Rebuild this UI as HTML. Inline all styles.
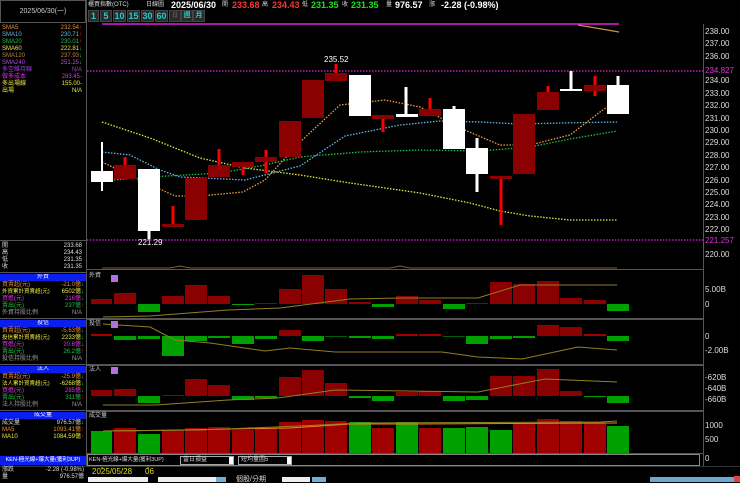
<!DOCTYPE html>
<html><head><meta charset="utf-8"><style>
*{margin:0;padding:0;box-sizing:border-box}
body{width:740px;height:482px;background:#000;overflow:hidden;position:relative;font-family:"Liberation Sans","Noto Sans CJK TC",sans-serif;color:#ddd}
.t{position:absolute;font-size:6px;line-height:7px;white-space:nowrap}
.r{text-align:right}
.a{position:absolute;left:705px;font-size:8px;line-height:8px;color:#ddd;white-space:nowrap}
.hd{position:absolute;left:0;width:86px;height:7px;background:#0a1ef0;color:#fff;font-size:6px;line-height:7px;text-align:center;overflow:hidden;white-space:nowrap}
.btn{position:absolute;top:10px;height:12px;background:#2a2a2a;border:1px solid #444;color:#2cc;font-size:9px;line-height:10px;text-align:center;font-weight:bold}
</style></head><body>
<svg width="740" height="482" style="position:absolute;left:0;top:0">
<rect x="0.5" y="0.5" width="85" height="22" fill="none" stroke="#555"/>
<g stroke="#555" fill="none">
<line x1="86.5" y1="0" x2="86.5" y2="466"/>
<line x1="87" y1="269.5" x2="703" y2="269.5"/>
<line x1="87" y1="318.5" x2="703" y2="318.5"/>
<line x1="87" y1="319.5" x2="703" y2="319.5"/>
<line x1="87" y1="364.5" x2="703" y2="364.5"/>
<line x1="87" y1="365.5" x2="703" y2="365.5"/>
<line x1="87" y1="410.5" x2="703" y2="410.5"/>
<line x1="87" y1="411.5" x2="703" y2="411.5"/>
<line x1="87" y1="453.5" x2="703" y2="453.5"/>
<line x1="703.5" y1="24" x2="703.5" y2="466"/>
<line x1="0" y1="240.5" x2="86" y2="240.5"/>
<line x1="0" y1="272.5" x2="86" y2="272.5"/>
<line x1="0" y1="318.5" x2="86" y2="318.5"/>
<line x1="0" y1="364.5" x2="86" y2="364.5"/>
<line x1="0" y1="410.5" x2="86" y2="410.5"/>
</g>
<rect x="87.5" y="454.5" width="612" height="11" fill="none" stroke="#888"/>
<line x1="102" y1="24" x2="619" y2="24" stroke="#e020e0" stroke-width="1.5"/>
<line x1="578" y1="25" x2="619" y2="32" stroke="#c89040" stroke-width="1.2"/>
<line x1="87" y1="71" x2="703" y2="71" stroke="#e020e0" stroke-dasharray="1.5,1.5" stroke-width="1.2"/>
<line x1="87" y1="240" x2="703" y2="240" stroke="#e020e0" stroke-dasharray="1.5,1.5" stroke-width="1.2"/>
<polyline points="102,268 170,268 180,266 190,268 390,268 400,266 410,268 617,268" fill="none" stroke="#806030" stroke-width="1"/>
<g fill="none" stroke-width="1.3" stroke-dasharray="1.5,1.5">
<polyline stroke="#e8e840" points="102,122 150,138 200,158 245,168 300,175 350,183 420,193 470,203 500,211 530,216 570,220 617,220"/>
<polyline stroke="#60b8e8" points="102,152 130,155 160,170 180,177 245,180 300,166 345,136 400,125 440,121 480,122 520,124 560,123 617,122"/>
<polyline stroke="#20c040" points="102,181 150,177 220,173 260,166 300,157 360,152 420,150 480,151 530,147 570,139 617,131"/>
<polyline stroke="#f0a040" points="102,162 140,180 175,196 200,196 243,192 265,180 300,142 340,105 385,100 420,107 460,128 500,145 530,145 570,135 600,112 617,100"/>
</g>
<g>
<line x1="102" y1="142" x2="102" y2="191" stroke="#fff" stroke-width="2"/>
<rect x="91" y="171" width="22" height="11" fill="#fff"/>
<line x1="125" y1="157" x2="125" y2="179" stroke="#f00" stroke-width="3"/>
<rect x="114" y="165" width="22" height="14" fill="#8b0000"/>
<line x1="149" y1="169" x2="149" y2="239" stroke="#fff" stroke-width="3"/>
<rect x="138" y="169" width="22" height="62" fill="#fff"/>
<line x1="173" y1="206" x2="173" y2="226" stroke="#f00" stroke-width="3"/>
<rect x="162" y="224" width="22" height="3" fill="#8b0000"/>
<rect x="185" y="178" width="22" height="42" fill="#8b0000"/>
<line x1="219" y1="149" x2="219" y2="166" stroke="#f00" stroke-width="3"/>
<rect x="208" y="165" width="22" height="12" fill="#8b0000"/>
<line x1="243" y1="162" x2="243" y2="175" stroke="#f00" stroke-width="3"/>
<rect x="232" y="162" width="22" height="5" fill="#8b0000"/>
<line x1="266" y1="150" x2="266" y2="173" stroke="#f00" stroke-width="3"/>
<rect x="255" y="157" width="22" height="5" fill="#8b0000"/>
<rect x="279" y="121" width="22" height="36" fill="#8b0000"/>
<rect x="302" y="80" width="22" height="38" fill="#8b0000"/>
<line x1="336" y1="64" x2="336" y2="74" stroke="#f00" stroke-width="3"/>
<rect x="325" y="73" width="22" height="8" fill="#8b0000"/>
<rect x="349" y="75" width="22" height="41" fill="#fff"/>
<line x1="383" y1="115" x2="383" y2="132" stroke="#f00" stroke-width="3"/>
<rect x="372" y="115" width="22" height="4" fill="#8b0000"/>
<line x1="406" y1="87" x2="406" y2="117" stroke="#fff" stroke-width="3"/>
<rect x="396" y="114" width="22" height="3" fill="#fff"/>
<line x1="430" y1="98" x2="430" y2="116" stroke="#f00" stroke-width="3"/>
<rect x="419" y="109" width="22" height="7" fill="#8b0000"/>
<line x1="454" y1="106" x2="454" y2="110" stroke="#fff" stroke-width="3"/>
<rect x="443" y="109" width="22" height="40" fill="#fff"/>
<line x1="477" y1="138" x2="477" y2="192" stroke="#fff" stroke-width="3"/>
<rect x="466" y="148" width="22" height="26" fill="#fff"/>
<line x1="501" y1="176" x2="501" y2="225" stroke="#f00" stroke-width="3"/>
<rect x="490" y="176" width="22" height="3" fill="#8b0000"/>
<rect x="513" y="114" width="22" height="60" fill="#8b0000"/>
<line x1="548" y1="86" x2="548" y2="92" stroke="#f00" stroke-width="3"/>
<rect x="537" y="92" width="22" height="18" fill="#8b0000"/>
<line x1="571" y1="71" x2="571" y2="91" stroke="#fff" stroke-width="3"/>
<rect x="560" y="89" width="22" height="2" fill="#fff"/>
<line x1="595" y1="76" x2="595" y2="96" stroke="#f00" stroke-width="3"/>
<rect x="584" y="85" width="22" height="6" fill="#8b0000"/>
<line x1="618" y1="76" x2="618" y2="85" stroke="#fff" stroke-width="3"/>
<rect x="607" y="85" width="22" height="29" fill="#fff"/>
</g>
<text x="324" y="62" fill="#fff" font-size="8" font-family="Liberation Sans">235.52</text>
<text x="138" y="245" fill="#fff" font-size="8" font-family="Liberation Sans">221.29</text>
<g>
<rect x="91" y="299" width="21" height="5" fill="#8b0000"/><rect x="114" y="293" width="22" height="11" fill="#8b0000"/><rect x="138" y="304" width="22" height="8" fill="#00a000"/>
<rect x="162" y="296" width="22" height="8" fill="#8b0000"/><rect x="185" y="285" width="22" height="19" fill="#8b0000"/><rect x="208" y="296" width="22" height="8" fill="#8b0000"/>
<rect x="232" y="304" width="22" height="1" fill="#00a000"/><rect x="255" y="303" width="22" height="1" fill="#8b0000"/><rect x="279" y="289" width="22" height="15" fill="#8b0000"/>
<rect x="302" y="275" width="22" height="29" fill="#8b0000"/><rect x="325" y="289" width="22" height="15" fill="#8b0000"/><rect x="349" y="302" width="22" height="2" fill="#8b0000"/>
<rect x="372" y="304" width="22" height="3" fill="#00a000"/><rect x="396" y="296" width="22" height="8" fill="#8b0000"/><rect x="419" y="300" width="22" height="4" fill="#8b0000"/>
<rect x="443" y="304" width="22" height="5" fill="#00a000"/><rect x="466" y="303" width="22" height="1" fill="#8b0000"/><rect x="490" y="282" width="22" height="22" fill="#8b0000"/>
<rect x="513" y="284" width="22" height="20" fill="#8b0000"/><rect x="537" y="281" width="22" height="23" fill="#8b0000"/><rect x="560" y="298" width="22" height="6" fill="#8b0000"/>
<rect x="584" y="300" width="22" height="4" fill="#8b0000"/><rect x="607" y="304" width="22" height="7" fill="#00a000"/>
<polyline points="103,317 150,316 228,310 280,308 350,299 400,298 478,298 520,285 550,285 617,285" fill="none" stroke="#908020" stroke-width="1"/>
</g>
<g>
<rect x="91" y="334" width="21" height="2" fill="#a00000"/><rect x="114" y="336" width="22" height="4" fill="#00a000"/><rect x="138" y="336" width="22" height="3" fill="#00a000"/>
<rect x="162" y="336" width="22" height="20" fill="#00a000"/><rect x="185" y="336" width="22" height="5" fill="#00a000"/><rect x="208" y="336" width="22" height="2" fill="#00a000"/>
<rect x="232" y="336" width="22" height="8" fill="#00a000"/><rect x="255" y="336" width="22" height="3" fill="#00a000"/><rect x="279" y="330" width="22" height="6" fill="#8b0000"/>
<rect x="302" y="336" width="22" height="5" fill="#00a000"/><rect x="325" y="336" width="22" height="1" fill="#006000"/><rect x="349" y="336" width="22" height="2" fill="#00a000"/>
<rect x="372" y="336" width="22" height="3" fill="#00a000"/><rect x="396" y="334" width="22" height="2" fill="#a00000"/><rect x="419" y="334" width="22" height="2" fill="#a00000"/>
<rect x="443" y="336" width="22" height="1" fill="#006000"/><rect x="466" y="336" width="22" height="8" fill="#00a000"/><rect x="490" y="336" width="22" height="3" fill="#00a000"/>
<rect x="513" y="336" width="22" height="2" fill="#00a000"/><rect x="537" y="325" width="22" height="11" fill="#8b0000"/><rect x="560" y="327" width="22" height="9" fill="#8b0000"/>
<rect x="584" y="334" width="22" height="2" fill="#a00000"/><rect x="607" y="336" width="22" height="5" fill="#00a000"/>
<polyline points="103,324 150,327 175,340 210,343 265,351 290,348 335,352 442,352 478,357 522,359 550,353 578,347 617,350" fill="none" stroke="#908020" stroke-width="1"/>
</g>
<g>
<rect x="91" y="390" width="21" height="6" fill="#8b0000"/><rect x="114" y="389" width="22" height="7" fill="#8b0000"/><rect x="138" y="396" width="22" height="7" fill="#00a000"/>
<rect x="162" y="395" width="22" height="1" fill="#8b0000"/><rect x="185" y="379" width="22" height="17" fill="#8b0000"/><rect x="208" y="385" width="22" height="11" fill="#8b0000"/>
<rect x="232" y="396" width="22" height="4" fill="#00a000"/><rect x="255" y="396" width="22" height="2" fill="#00a000"/><rect x="279" y="377" width="22" height="19" fill="#8b0000"/>
<rect x="302" y="370" width="22" height="26" fill="#8b0000"/><rect x="325" y="383" width="22" height="13" fill="#8b0000"/><rect x="349" y="396" width="22" height="2" fill="#00a000"/>
<rect x="372" y="396" width="22" height="5" fill="#00a000"/><rect x="396" y="392" width="22" height="4" fill="#8b0000"/><rect x="419" y="391" width="22" height="5" fill="#8b0000"/>
<rect x="443" y="396" width="22" height="5" fill="#00a000"/><rect x="466" y="396" width="22" height="4" fill="#00a000"/><rect x="490" y="376" width="22" height="20" fill="#8b0000"/>
<rect x="513" y="376" width="22" height="20" fill="#8b0000"/><rect x="537" y="369" width="22" height="27" fill="#8b0000"/><rect x="560" y="391" width="22" height="5" fill="#8b0000"/>
<rect x="584" y="396" width="22" height="1" fill="#00a000"/><rect x="607" y="396" width="22" height="7" fill="#00a000"/>
<polyline points="103,405 156,405 228,400 278,398 335,390 478,392 545,379 617,382" fill="none" stroke="#908020" stroke-width="1"/>
</g>
<g>
<rect x="91" y="431" width="21" height="22" fill="#00a000"/><rect x="114" y="428" width="22" height="25" fill="#a00000"/><rect x="138" y="434" width="22" height="19" fill="#00a000"/>
<rect x="162" y="430" width="22" height="23" fill="#a00000"/><rect x="185" y="428" width="22" height="25" fill="#a00000"/><rect x="208" y="427" width="22" height="26" fill="#a00000"/>
<rect x="232" y="430" width="22" height="23" fill="#a00000"/><rect x="255" y="428" width="22" height="25" fill="#a00000"/><rect x="279" y="422" width="22" height="31" fill="#a00000"/>
<rect x="302" y="420" width="22" height="33" fill="#a00000"/><rect x="325" y="421" width="22" height="32" fill="#a00000"/><rect x="349" y="422" width="22" height="31" fill="#00a000"/>
<rect x="372" y="428" width="22" height="25" fill="#a00000"/><rect x="396" y="422" width="22" height="31" fill="#00a000"/><rect x="419" y="428" width="22" height="25" fill="#a00000"/>
<rect x="443" y="428" width="22" height="25" fill="#00a000"/><rect x="466" y="427" width="22" height="26" fill="#00a000"/><rect x="490" y="430" width="22" height="23" fill="#00a000"/>
<rect x="513" y="423" width="22" height="30" fill="#a00000"/><rect x="537" y="419" width="22" height="34" fill="#a00000"/><rect x="560" y="421" width="22" height="32" fill="#a00000"/>
<rect x="584" y="423" width="22" height="30" fill="#a00000"/><rect x="607" y="426" width="22" height="27" fill="#00a000"/>
<polyline points="103,431 180,430 290,428 350,424 420,424 617,423" fill="none" stroke="#f08020" stroke-width="1"/>
<polyline points="103,431 200,430 300,426 360,423 600,422 617,421" fill="none" stroke="#908020" stroke-width="1"/>
</g>
<rect x="111" y="275" width="7" height="7" fill="#b070e0"/>
<rect x="111" y="321" width="7" height="7" fill="#b070e0"/>
<rect x="111" y="367" width="7" height="7" fill="#b070e0"/>
<line x1="102" y1="466" x2="102" y2="469" stroke="#cc0"/><line x1="148" y1="466" x2="148" y2="469" stroke="#cc0"/>
<line x1="0" y1="466.5" x2="740" y2="466.5" stroke="#333"/>
<rect x="180.5" y="456.5" width="53" height="8" fill="#000" stroke="#aaa"/><rect x="229" y="457" width="4" height="7" fill="#fff"/>
<rect x="238.5" y="456.5" width="53" height="8" fill="#000" stroke="#aaa"/><rect x="287" y="457" width="4" height="7" fill="#fff"/>
<rect x="88" y="477" width="60" height="6" fill="#eee"/><rect x="158" y="477" width="58" height="6" fill="#eee"/><rect x="216" y="477" width="10" height="6" fill="#6ab0e0"/>
<rect x="282" y="477" width="28" height="6" fill="#eee"/><rect x="312" y="477" width="14" height="6" fill="#6ab0e0"/>
<rect x="650" y="477" width="90" height="6" fill="#6aa8d8"/><rect x="734" y="476" width="6" height="6" fill="#e04040"/>
</svg>

<div class="t" style="left:0;top:8px;width:86px;text-align:center;color:#ccc;font-size:7px">2025/06/30(一)</div>
<div class="t" style="left:88px;top:2px;color:#ddd">櫃買指數(OTC)</div>
<div class="t" style="left:146px;top:2px;color:#ddd">日線圖</div>
<div class="t" style="left:171px;top:1px;font-size:9px;line-height:9px;color:#fff;font-weight:bold">2025/06/30</div>
<div class="t" style="left:222px;top:2px;color:#ddd">開</div>
<div class="t" style="left:232px;top:1px;font-size:9px;line-height:9px;color:#f33;font-weight:bold">233.68</div>
<div class="t" style="left:262px;top:2px;color:#ddd">高</div>
<div class="t" style="left:272px;top:1px;font-size:9px;line-height:9px;color:#f33;font-weight:bold">234.43</div>
<div class="t" style="left:302px;top:2px;color:#ddd">低</div>
<div class="t" style="left:311px;top:1px;font-size:9px;line-height:9px;color:#2d2;font-weight:bold">231.35</div>
<div class="t" style="left:342px;top:2px;color:#ddd">收</div>
<div class="t" style="left:351px;top:1px;font-size:9px;line-height:9px;color:#2d2;font-weight:bold">231.35</div>
<div class="t" style="left:386px;top:2px;color:#ddd">量</div>
<div class="t" style="left:395px;top:1px;font-size:9px;line-height:9px;color:#fff;font-weight:bold">976.57</div>
<div class="t" style="left:429px;top:2px;color:#ddd">漲</div>
<div class="t" style="left:441px;top:1px;font-size:9px;line-height:9px;color:#fff;font-weight:bold">-2.28 (-0.98%)</div>
<div class="btn" style="left:88px;width:11px">1</div>
<div class="btn" style="left:100px;width:12px">5</div>
<div class="btn" style="left:113px;width:13px">10</div>
<div class="btn" style="left:127px;width:13px">15</div>
<div class="btn" style="left:141px;width:13px">30</div>
<div class="btn" style="left:155px;width:13px">60</div>
<div class="btn" style="left:169px;width:12px;color:#555;font-size:6px">日</div>
<div class="btn" style="left:181px;width:12px;font-size:7px">週</div>
<div class="btn" style="left:193px;width:12px;font-size:7px">月</div>

<div class="t" style="left:2px;top:25px;color:#e89030">SMA5</div><div class="t r" style="right:658px;top:25px;color:#e89030">232.54<span style="color:#f22">↑</span></div>
<div class="t" style="left:2px;top:32px;color:#60b8e8">SMA10</div><div class="t r" style="right:658px;top:32px;color:#60b8e8">230.71<span style="color:#f22">↑</span></div>
<div class="t" style="left:2px;top:39px;color:#20c040">SMA20</div><div class="t r" style="right:658px;top:39px;color:#20c040">230.01<span style="color:#f22">↑</span></div>
<div class="t" style="left:2px;top:46px;color:#e8e840">SMA60</div><div class="t r" style="right:658px;top:46px;color:#e8e840">222.81<span style="color:#2d2">↓</span></div>
<div class="t" style="left:2px;top:53px;color:#c08040">SMA120</div><div class="t r" style="right:658px;top:53px;color:#c08040">237.93<span style="color:#2d2">↓</span></div>
<div class="t" style="left:2px;top:60px;color:#b050e0">SMA240</div><div class="t r" style="right:658px;top:60px;color:#b050e0">251.25<span style="color:#2d2">↓</span></div>
<div class="t" style="left:2px;top:67px;color:#a040e0">多空維持線</div><div class="t r" style="right:658px;top:67px;color:#a040e0">N/A</div>
<div class="t" style="left:2px;top:74px;color:#e030e0">做多成本</div><div class="t r" style="right:658px;top:74px;color:#e030e0">283.45-</div>
<div class="t" style="left:2px;top:81px;color:#e8e840">多出場線</div><div class="t r" style="right:658px;top:81px;color:#e8e840">155.00-</div>
<div class="t" style="left:2px;top:88px;color:#e8e840">出場</div><div class="t r" style="right:658px;top:88px;color:#e8e840">N/A</div>

<div class="t" style="left:2px;top:243px">開</div><div class="t r" style="right:658px;top:243px">233.68</div>
<div class="t" style="left:2px;top:250px">高</div><div class="t r" style="right:658px;top:250px">234.43</div>
<div class="t" style="left:2px;top:257px">低</div><div class="t r" style="right:658px;top:257px">231.35</div>
<div class="t" style="left:2px;top:264px">收</div><div class="t r" style="right:658px;top:264px">231.35</div>

<div class="hd" style="top:274px">外資</div>
<div class="t" style="left:2px;top:282px;color:#e89030">買賣超(元)</div><div class="t r" style="right:656px;top:282px;color:#e89030">-21.0億<span style="color:#2d2">↓</span></div>
<div class="t" style="left:2px;top:289px;color:#e8e840;font-size:5.5px">外資累計買賣超(元)</div><div class="t r" style="right:656px;top:289px;color:#e8e840">6502億<span style="color:#2d2">↓</span></div>
<div class="t" style="left:2px;top:296px;color:#e030e0">買進(元)</div><div class="t r" style="right:656px;top:296px;color:#e030e0">216億<span style="color:#2d2">↓</span></div>
<div class="t" style="left:2px;top:303px;color:#20c040">賣出(元)</div><div class="t r" style="right:656px;top:303px;color:#20c040">237億<span style="color:#f22">↑</span></div>
<div class="t" style="left:2px;top:310px;color:#999">外資持股比例</div><div class="t r" style="right:658px;top:310px;color:#999">N/A</div>

<div class="hd" style="top:320px">投信</div>
<div class="t" style="left:2px;top:328px;color:#e89030">買賣超(元)</div><div class="t r" style="right:656px;top:328px;color:#e89030">-5.63億<span style="color:#2d2">↓</span></div>
<div class="t" style="left:2px;top:335px;color:#e8e840;font-size:5.5px">投信累計買賣超(元)</div><div class="t r" style="right:656px;top:335px;color:#e8e840">2233億<span style="color:#2d2">↓</span></div>
<div class="t" style="left:2px;top:342px;color:#e030e0">買進(元)</div><div class="t r" style="right:656px;top:342px;color:#e030e0">20.6億<span style="color:#2d2">↓</span></div>
<div class="t" style="left:2px;top:349px;color:#20c040">賣出(元)</div><div class="t r" style="right:656px;top:349px;color:#20c040">26.2億<span style="color:#f22">↑</span></div>
<div class="t" style="left:2px;top:356px;color:#999">投信持股比例</div><div class="t r" style="right:658px;top:356px;color:#999">N/A</div>

<div class="hd" style="top:366px">法人</div>
<div class="t" style="left:2px;top:374px;color:#e89030">買賣超(元)</div><div class="t r" style="right:656px;top:374px;color:#e89030">-25.9億<span style="color:#2d2">↓</span></div>
<div class="t" style="left:2px;top:381px;color:#e8e840;font-size:5.5px">法人累計買賣超(元)</div><div class="t r" style="right:656px;top:381px;color:#e8e840">-6268億<span style="color:#2d2">↓</span></div>
<div class="t" style="left:2px;top:388px;color:#e030e0">買進(元)</div><div class="t r" style="right:656px;top:388px;color:#e030e0">285億<span style="color:#2d2">↓</span></div>
<div class="t" style="left:2px;top:395px;color:#20c040">賣出(元)</div><div class="t r" style="right:656px;top:395px;color:#20c040">311億<span style="color:#f22">↑</span></div>
<div class="t" style="left:2px;top:402px;color:#999">法人持股比例</div><div class="t r" style="right:658px;top:402px;color:#999">N/A</div>

<div class="hd" style="top:412px">成交量</div>
<div class="t" style="left:2px;top:420px;color:#ddd">成交量</div><div class="t r" style="right:656px;top:420px;color:#ddd">976.57億<span style="color:#2d2">↓</span></div>
<div class="t" style="left:2px;top:427px;color:#e89030">MA5</div><div class="t r" style="right:656px;top:427px;color:#e89030">1093.41億<span style="color:#f22">↑</span></div>
<div class="t" style="left:2px;top:434px;color:#e8e840">MA10</div><div class="t r" style="right:656px;top:434px;color:#e8e840">1084.59億<span style="color:#f22">↑</span></div>

<div class="t" style="left:89px;top:273px;color:#ccc">外資</div>
<div class="t" style="left:89px;top:321px;color:#ccc">投信</div>
<div class="t" style="left:89px;top:367px;color:#ccc">法人</div>
<div class="t" style="left:89px;top:413px;color:#ccc">成交量</div>

<div class="hd" style="top:456px;height:9px;line-height:9px;font-size:5.5px">KEN-極光線+爆大量(獲利3UP)</div>
<div class="t" style="left:89px;top:457px;color:#ddd;font-size:5.5px">KEN-極光線+爆大量(獲利3UP)</div>
<div class="t" style="left:183px;top:457px;color:#ddd">當日損益</div>
<div class="t" style="left:241px;top:457px;color:#ddd">短均量圖5</div>
<div class="t" style="left:92px;top:468px;color:#dd2;font-size:8px;line-height:8px">2025/05/28</div>
<div class="t" style="left:145px;top:468px;color:#dd2;font-size:8px;line-height:8px">06</div>
<div class="t" style="left:2px;top:467px">漲跌</div><div class="t r" style="right:656px;top:467px">-2.28 (-0.98%)</div>
<div class="t" style="left:2px;top:474px">量</div><div class="t r" style="right:656px;top:474px">976.57億</div>
<div class="t" style="left:236px;top:476px;color:#ddd;font-size:7px">個股/分期</div>

<div class="a" style="top:28px">238.00</div>
<div class="a" style="top:40px">237.00</div>
<div class="a" style="top:53px">236.00</div>
<div class="a" style="top:67px;color:#e030e0">234.827</div>
<div class="a" style="top:77px">234.00</div>
<div class="a" style="top:90px">233.00</div>
<div class="a" style="top:102px">232.00</div>
<div class="a" style="top:115px">231.00</div>
<div class="a" style="top:127px">230.00</div>
<div class="a" style="top:139px">229.00</div>
<div class="a" style="top:152px">228.00</div>
<div class="a" style="top:164px">227.00</div>
<div class="a" style="top:177px">226.00</div>
<div class="a" style="top:189px">225.00</div>
<div class="a" style="top:201px">224.00</div>
<div class="a" style="top:214px">223.00</div>
<div class="a" style="top:226px">222.00</div>
<div class="a" style="top:237px;color:#e030e0">221.257</div>
<div class="a" style="top:251px">220.00</div>
<div class="a" style="top:286px">5.00B</div>
<div class="a" style="top:301px">0</div>
<div class="a" style="top:333px">0</div>
<div class="a" style="top:347px">-2.00B</div>
<div class="a" style="top:374px">-620B</div>
<div class="a" style="top:385px">-640B</div>
<div class="a" style="top:396px">-660B</div>
<div class="a" style="top:422px">1000</div>
<div class="a" style="top:436px">500</div>
<div class="a" style="top:455px">0</div>
</body></html>
